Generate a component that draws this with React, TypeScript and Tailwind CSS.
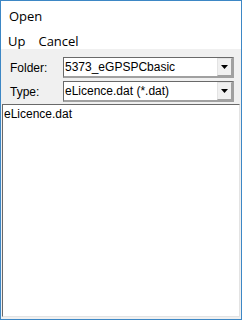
import { ReactNode } from "react";

function Combo({ value }: { value: string }) {
  return (
    <div className="flex h-[21px] w-[171px] border-t border-l border-[#696969] border-r-2 border-b-2 border-r-[#a0a0a0] border-b-[#a0a0a0] bg-white">
      <div className="flex flex-1 items-center pl-[1px] text-[12px] leading-none text-black">{value}</div>
      <div className="flex w-[15px] items-center justify-center border border-[#e3e3e3] border-r-[#a0a0a0] border-b-[#a0a0a0] bg-[#f0f0f0]">
        <svg width="7" height="4" viewBox="0 0 7 4">
          <path d="M0 0h7L3.5 4z" fill="#000" />
        </svg>
      </div>
    </div>
  );
}

function Row({ label, children }: { label: string; children: ReactNode }) {
  return (
    <div className="flex items-center">
      <span className="w-[62px] pl-[9px] text-[12px] text-black">{label}</span>
      {children}
    </div>
  );
}

export default function App() {
  return (
    <div
      className="flex h-[320px] w-[242px] flex-col border border-[#3d87c5] bg-[#f0f0f0]"
      style={{ fontFamily: "'Liberation Sans', Arial, sans-serif" }}
    >
      <div className="h-[48px] bg-white text-[13px] text-black" style={{ fontFamily: "'Open Sans', 'Noto Sans', sans-serif" }}>
        <div className="pl-[8px] pt-[5px] leading-[20px]">Open</div>
        <div className="flex gap-[13px] pl-[7px] pt-[5px] leading-[20px]">
          <span>Up</span>
          <span>Cancel</span>
        </div>
      </div>
      <div className="flex flex-col gap-[3px] pt-[8px]">
        <Row label="Folder:">
          <Combo value="5373_eGPSPCbasic" />
        </Row>
        <Row label="Type:">
          <Combo value="eLicence.dat (*.dat)" />
        </Row>
      </div>
      <div className="mx-[1px] mt-[2px] mb-[2px] flex-1 border-t border-l border-[#696969] border-r border-b border-r-[#e3e3e3] border-b-[#e3e3e3] bg-white">
        <div className="pl-[1px] pt-[2px] text-[12px] leading-[15px] text-black">eLicence.dat</div>
      </div>
    </div>
  );
}
